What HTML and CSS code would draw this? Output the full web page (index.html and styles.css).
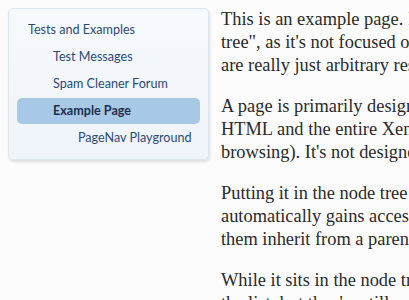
FILE: index.html
```html
<!DOCTYPE html>
<html>
<head>
<meta charset="utf-8">
<link rel="stylesheet" href="styles.css">
</head>
<body>
<div class="page">
  <aside class="sidebar">
    <nav class="tree">
      <a class="item lvl0" href="#">Tests and Examples</a>
      <a class="item lvl1" href="#">Test Messages</a>
      <a class="item lvl1" href="#">Spam Cleaner Forum</a>
      <a class="item lvl1 selected" href="#">Example Page</a>
      <a class="item lvl2" href="#">PageNav Playground</a>
    </nav>
  </aside>
  <main class="content">
    <p>This is an example page. It is placed in the "node<br>tree", as it's not focused on discussion. Pages<br>are really just arbitrary resources.</p>
    <p>A page is primarily designed to display content using<br>HTML and the entire XenForo template system (for<br>browsing). It's not designed to replace applications.</p>
    <p>Putting it in the node tree means that the page<br>automatically gains access to permissions, letting<br>them inherit from a parent node.</p>
    <p>While it sits in the node tree, it is not shown in<br>the list, but they're still available for navigation.</p>
  </main>
</div>
</body>
</html>
```
FILE: styles.css
```css
html, body {
  margin: 0;
  padding: 0;
  background: #fcfcfd;
  overflow: hidden;
}
.page {
  display: flex;
  align-items: flex-start;
  gap: 12px;
  padding: 8px 0 0 8px;
  width: 900px;
}
.sidebar {
  flex: 0 0 201px;
}
.tree {
  display: flex;
  flex-direction: column;
  padding: 8px;
  background: linear-gradient(#f7fafd, #eef4fa);
  border: 1px solid #dce6ef;
  border-radius: 5px;
  box-shadow: 1px 2px 3px rgba(0, 0, 0, 0.12);
}
.item {
  display: block;
  height: 26px;
  line-height: 26px;
  margin-bottom: 1px;
  border-radius: 5px;
  font-family: Lato, "Noto Sans", sans-serif;
  font-size: 12.6px;
  color: #2d4a77;
  text-decoration: none;
  white-space: nowrap;
}
.item:last-child {
  margin-bottom: 0;
}
.lvl0 { padding-left: 11px; }
.lvl1 { padding-left: 36px; }
.lvl2 { padding-left: 61px; }
.selected {
  background: #a8c9e5;
  color: #1b2f4e;
  font-weight: bold;
}
.content {
  flex: 0 0 640px;
  font-family: "Liberation Serif", "Times New Roman", serif;
  font-size: 18.4px;
  line-height: 23px;
  color: #2a2a2a;
  white-space: nowrap;
}
.content p {
  margin: 0 0 18px 0;
}
```
